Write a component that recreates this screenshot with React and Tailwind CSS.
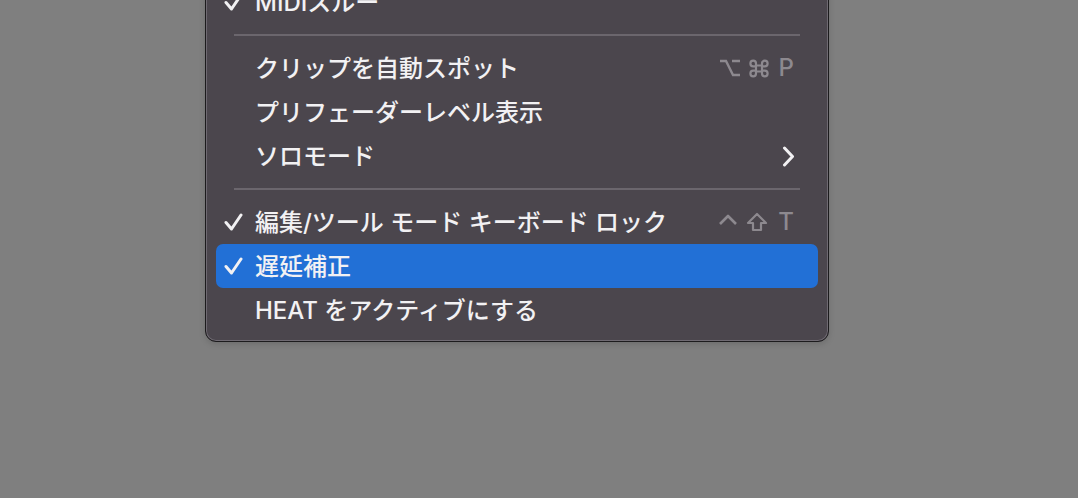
const FONT = { fontFamily: 'Inter, "Noto Sans CJK JP", sans-serif' };

function Check() {
  return (
    <svg width="19" height="18" viewBox="0 0 19 18" fill="none" className="shrink-0">
      <path d="M2 9.5 L7.5 16 L17 2" stroke="#f2f1f3" strokeWidth="3" strokeLinecap="round" strokeLinejoin="round" />
    </svg>
  );
}

function Chevron() {
  return (
    <svg width="13" height="21" viewBox="0 0 13 21" fill="none" className="-mr-[1px]">
      <path d="M2.5 2 L10.5 10.5 L2.5 19" stroke="#f2f1f3" strokeWidth="3" strokeLinecap="round" strokeLinejoin="round" />
    </svg>
  );
}

function Separator() {
  return (
    <div className="h-[22px] flex items-center px-[18px]">
      <div className="h-[2px] w-full bg-[#6b666d]" />
    </div>
  );
}

function Row({ label, checked, active, shortcut, submenu }) {
  return (
    <div
      className={
        "h-[44px] flex items-center rounded-[7px] pl-[8px] pr-[24px] text-[24px] text-[#f2f1f3] " +
        (active ? "bg-[#2270d6]" : "")
      }
    >
      <div className="w-[31px] flex items-center">{checked && <Check />}</div>
      <div className="flex-1 whitespace-nowrap leading-none font-medium pt-[2px]">{label}</div>
      {shortcut && (
        <div className="flex items-center gap-[8px] text-[#8d898f] text-[24px] leading-none font-medium">
          {shortcut}
        </div>
      )}
      {submenu && <Chevron />}
    </div>
  );
}

function OptionKey() {
  return (
    <svg width="22" height="18" viewBox="0 0 22 18" fill="none">
      <path d="M1 2 H7 L14 16 H21 M13 2 H21" stroke="#8d898f" strokeWidth="2.4" />
    </svg>
  );
}

function CmdKey() {
  return (
    <svg width="20" height="19" viewBox="0 0 20 19" fill="none">
      <path
        d="M7 6.5 H13 V12.5 H7 Z M7 6.5 V4.5 A2.8 2.8 0 1 0 4.2 7.3 H7 M13 6.5 V4.5 A2.8 2.8 0 1 1 15.8 7.3 H13 M7 12.5 V14.5 A2.8 2.8 0 1 1 4.2 11.7 H7 M13 12.5 V14.5 A2.8 2.8 0 1 0 15.8 11.7 H13"
        stroke="#8d898f"
        strokeWidth="2.2"
      />
    </svg>
  );
}

function CtrlKey() {
  return (
    <svg width="20" height="18" viewBox="0 0 20 18" fill="none">
      <path d="M2 11 L10 3 L18 11" stroke="#8d898f" strokeWidth="2.6" strokeLinejoin="round" />
    </svg>
  );
}

function ShiftKey() {
  return (
    <svg width="22" height="20" viewBox="0 0 22 20" fill="none">
      <path d="M11 2 L20 11 H15 V18 H7 V11 H2 Z" stroke="#8d898f" strokeWidth="2.2" strokeLinejoin="round" />
    </svg>
  );
}

export default function App() {
  return (
    <div className="h-screen w-full overflow-hidden bg-[#7f7f7f]" style={FONT}>
      <div className="ml-[205px] w-[624px] -mt-[31px] rounded-[11px] border border-[#1c1b1d] bg-[#4b464d] px-[10px] pt-[10px] pb-[9px] shadow-[inset_0_0_0_1px_#6f6a72,0_2px_6px_rgba(0,0,0,0.15)]">
        <Row label="MIDIスルー" checked />
        <Separator />
        <Row
          label="クリップを自動スポット"
          shortcut={
            <>
              <OptionKey />
              <CmdKey />
              <span className="ml-[2px]">P</span>
            </>
          }
        />
        <Row label="プリフェーダーレベル表示" />
        <Row label="ソロモード" submenu />
        <Separator />
        <Row
          label="編集/ツール モード キーボード ロック"
          checked
          shortcut={
            <>
              <CtrlKey />
              <ShiftKey />
              <span className="ml-[2px]">T</span>
            </>
          }
        />
        <Row label="遅延補正" checked active />
        <Row label="HEAT をアクティブにする" />
      </div>
    </div>
  );
}
